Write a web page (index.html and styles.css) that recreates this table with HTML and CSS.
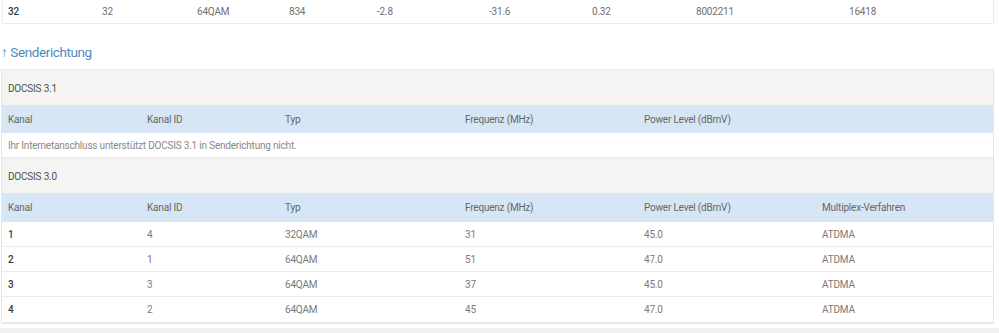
FILE: index.html
```html
<!DOCTYPE html>
<html lang="de">
<head>
<meta charset="utf-8">
<title>Kabel-Info</title>
<link rel="stylesheet" href="styles.css">
</head>
<body>
<div class="page">
  <div class="prev-table">
    <div class="row prev-row">
      <div class="cell strong">32</div>
      <div class="cell">32</div>
      <div class="cell">64QAM</div>
      <div class="cell">834</div>
      <div class="cell">-2.8</div>
      <div class="cell">-31.6</div>
      <div class="cell">0.32</div>
      <div class="cell">8002211</div>
      <div class="cell">16418</div>
    </div>
  </div>

  <h2 class="section-title">↑ Senderichtung</h2>

  <div class="box">
    <div class="group-title first">DOCSIS 3.1</div>
    <div class="row grid head">
      <div class="cell">Kanal</div>
      <div class="cell">Kanal ID</div>
      <div class="cell">Typ</div>
      <div class="cell">Frequenz (MHz)</div>
      <div class="cell">Power Level (dBmV)</div>
    </div>
    <div class="row msg">Ihr Internetanschluss unterstützt DOCSIS 3.1 in Senderichtung nicht.</div>

    <div class="group-title">DOCSIS 3.0</div>
    <div class="row grid head head2">
      <div class="cell">Kanal</div>
      <div class="cell">Kanal ID</div>
      <div class="cell">Typ</div>
      <div class="cell">Frequenz (MHz)</div>
      <div class="cell">Power Level (dBmV)</div>
      <div class="cell">Multiplex-Verfahren</div>
    </div>
    <div class="row grid data">
      <div class="cell strong">1</div><div class="cell">4</div><div class="cell">32QAM</div><div class="cell">31</div><div class="cell">45.0</div><div class="cell">ATDMA</div>
    </div>
    <div class="row grid data">
      <div class="cell strong">2</div><div class="cell">1</div><div class="cell">64QAM</div><div class="cell">51</div><div class="cell">47.0</div><div class="cell">ATDMA</div>
    </div>
    <div class="row grid data">
      <div class="cell strong">3</div><div class="cell">3</div><div class="cell">64QAM</div><div class="cell">37</div><div class="cell">45.0</div><div class="cell">ATDMA</div>
    </div>
    <div class="row grid data last">
      <div class="cell strong">4</div><div class="cell">2</div><div class="cell">64QAM</div><div class="cell">45</div><div class="cell">47.0</div><div class="cell">ATDMA</div>
    </div>
  </div>
  <div class="footer-band"></div>
</div>
</body>
</html>
```

FILE: styles.css
```css
html, body {
  margin: 0;
  padding: 0;
  background: #ffffff;
}

.page {
  width: 999px;
  height: 333px;
  overflow: hidden;
  font-family: Roboto, "Liberation Sans", sans-serif;
  font-size: 10px;
  letter-spacing: -0.2px;
  color: #707070;
}

.prev-table {
  margin: 0 5px 0 2px;
  border-left: 1px solid #ececec;
  border-right: 1px solid #ececec;
}

.prev-row {
  display: grid;
  grid-template-columns: 94px 95px 92px 88px 112px 103px 104px 153px 1fr;
  height: 24px;
  align-items: center;
  padding-left: 5px;
  border-bottom: 1px solid #ebebeb;
  box-sizing: border-box;
}

.strong {
  font-weight: 500;
  color: #3c3c3c;
}

.section-title {
  margin: 0;
  padding: 18px 0 7px 1px;
  height: 20px;
  font-size: 13.5px;
  font-weight: 400;
  letter-spacing: -0.4px;
  line-height: 20px;
  color: #4e8cba;
}

.box {
  margin: 0 5px 0 1px;
  border-left: 1px solid #e6e6e6;
  border-right: 1px solid #e6e6e6;
  border-bottom: 1px solid #e6e6e6;
}

.group-title {
  background: #f4f4f2;
  height: 35px;
  padding: 0 0 0 6px;
  display: flex;
  align-items: center;
  color: #505050;
  border-top: 1px solid #ececec;
  box-sizing: border-box;
}

.group-title.first {
  height: 36px;
  padding-top: 2px;
}

.row {
  box-sizing: border-box;
}

.grid {
  display: grid;
  grid-template-columns: 139px 138px 180px 179px 178px 1fr;
  align-items: center;
  padding-left: 6px;
}

.head {
  background: #d6e6f4;
  height: 28px;
  color: #666666;
}

.head2 {
  height: 29px;
}

.msg {
  height: 25px;
  display: flex;
  align-items: center;
  padding-left: 6px;
  color: #888888;
  border-bottom: 1px solid #eaeaea;
  background: #ffffff;
}

.data {
  height: 25px;
  border-bottom: 1px solid #ececec;
  color: #7a7a7a;
}

.data.last {
  height: 26px;
}

.footer-band {
  margin-top: 4px;
  height: 10px;
  background: #f0f0f0;
}
```
